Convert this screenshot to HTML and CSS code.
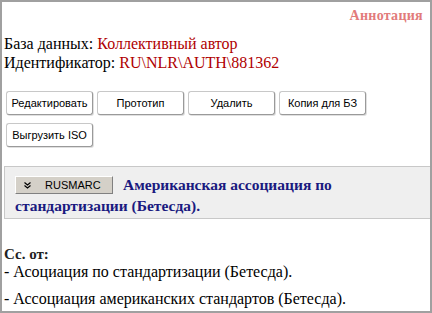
FILE: index.html
```html
<!DOCTYPE html>
<html lang="ru">
<head>
    <meta charset="UTF-8">
    <title>Аннотация</title>
    <link rel="stylesheet" href="styles.css">
</head>
<body>
    <div class="frame">
        <div class="annot-link">Аннотация</div>
        <div class="info">
            <div>База данных: <span class="val">Коллективный автор</span></div>
            <div>Идентификатор: <span class="val">RU\NLR\AUTH\881362</span></div>
        </div>
        <div class="actions">
            <button class="btn">Редактировать</button>
            <button class="btn">Прототип</button>
            <button class="btn">Удалить</button>
            <button class="btn">Копия для БЗ</button>
            <button class="btn">Выгрузить ISO</button>
        </div>
        <div class="record">
            <div class="marc-btn">
                <svg width="7" height="7" viewBox="0 0 7 7"><path d="M0.5 0.5 L3.5 3 L6.5 0.5 M0.5 3.5 L3.5 6 L6.5 3.5" fill="none" stroke="#000" stroke-width="1.2"/></svg>
                RUSMARC
            </div>
            <span class="title">Американская ассоциация по стандартизации (Бетесда).</span>
        </div>
        <div class="refs">
            <div class="refs-head">Сс. от:</div>
            <div class="ref">- Асоциация по стандартизации (Бетесда).</div>
            <div class="ref">- Ассоциация американских стандартов (Бетесда).</div>
        </div>
    </div>
</body>
</html>
```

FILE: styles.css
```css
body {
    margin: 0;
    font-family: "Liberation Serif", "Times New Roman", serif;
    font-size: 16px;
    color: #000;
    background: #fff;
}
.frame {
    height: 313px;
    box-sizing: border-box;
    border: 2px solid #a0a0a0;
    overflow: hidden;
}
.annot-link {
    text-align: right;
    font-size: 14px;
    font-weight: bold;
    color: #e27b7b;
    padding: 6px 7px 0 0;
    letter-spacing: 0.3px;
}
.info {
    padding: 10px 0 0 2px;
    line-height: 19px;
}
.val {
    color: #b00000;
}
.actions {
    display: flex;
    flex-wrap: wrap;
    gap: 8px 4px;
    width: 370px;
    padding: 19px 0 0 4px;
}
.btn {
    width: 87px;
    height: 24px;
    font-family: "Liberation Sans", Arial, sans-serif;
    font-size: 11px;
    color: #000;
    background: #fff;
    border: 1px solid #c8c8c8;
    border-right-color: #9a9a9a;
    border-bottom-color: #9a9a9a;
    border-radius: 3px;
    box-shadow: 1px 1px 0 #e0e0e0;
    padding: 0;
}
.record {
    margin: 19px 0 0 2px;
    padding: 7px 4px 2px 10px;
    background: #efefef;
    border: 1px solid #c8c8c8;
    border-right: none;
    color: #1a1a80;
    font-weight: bold;
    font-size: 15.5px;
    line-height: 21px;
}
.marc-btn {
    float: left;
    display: flex;
    align-items: center;
    box-sizing: border-box;
    width: 98px;
    height: 18px;
    margin: 2px 10px 0 0;
    padding: 0 0 0 8px;
    gap: 14px;
    font-family: "Liberation Sans", Arial, sans-serif;
    font-size: 11px;
    font-weight: normal;
    line-height: 14px;
    color: #000;
    background: #d4d0c8;
    border: 1px solid;
    border-color: #fff #808080 #808080 #fff;
    cursor: pointer;
}
.refs {
    padding: 27px 0 0 2px;
}
.refs-head {
    font-weight: bold;
    font-size: 15px;
    line-height: 16px;
    color: #222;
}
.ref {
    line-height: 20px;
}
.ref + .ref {
    margin-top: 7px;
}
```
